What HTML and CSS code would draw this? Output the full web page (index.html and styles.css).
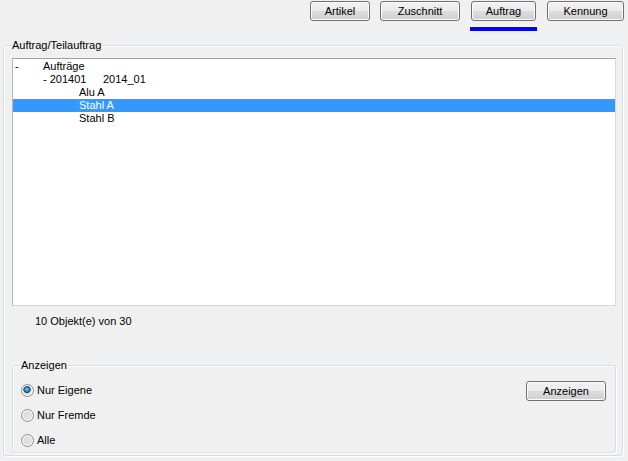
FILE: index.html
```html
<!DOCTYPE html>
<html lang="de">
<head>
<meta charset="utf-8">
<title>Auftrag</title>
<link rel="stylesheet" href="styles.css">
</head>
<body>
<div class="toolbar">
  <div class="tab"><button class="btn w-artikel">Artikel</button></div>
  <div class="tab"><button class="btn w-zuschnitt">Zuschnitt</button></div>
  <div class="tab active"><button class="btn w-auftrag">Auftrag</button><div class="indicator"></div></div>
  <div class="tab"><button class="btn w-kennung">Kennung</button></div>
</div>
<fieldset class="group outer">
  <legend>Auftrag/Teilauftrag</legend>
  <div class="tree">
    <div class="row lvl0"><span class="toggle0">-</span><span>Aufträge</span></div>
    <div class="row lvl1"><span class="toggle1">- 201401</span><span>2014_01</span></div>
    <div class="row lvl2"><span>Alu A</span></div>
    <div class="row lvl2 selected"><span>Stahl A</span></div>
    <div class="row lvl2"><span>Stahl B</span></div>
  </div>
  <div class="status">10 Objekt(e) von 30</div>
  <fieldset class="group inner">
    <legend>Anzeigen</legend>
    <div class="inner-body">
      <div class="radios">
        <label class="radio-row"><span class="radio checked"></span>Nur Eigene</label>
        <label class="radio-row"><span class="radio"></span>Nur Fremde</label>
        <label class="radio-row"><span class="radio"></span>Alle</label>
      </div>
      <button class="btn w-anzeigen">Anzeigen</button>
    </div>
  </fieldset>
</fieldset>
</body>
</html>
```
FILE: styles.css
```css
html, body {
  margin: 0;
  padding: 0;
  background: #f0f0f0;
}
body {
  font-family: "Liberation Sans", Arial, sans-serif;
  font-size: 11px;
  line-height: 13px;
  color: #000;
  width: 628px;
  height: 461px;
  overflow: hidden;
}

/* top toolbar */
.toolbar {
  display: flex;
  justify-content: flex-end;
  gap: 10px;
  padding: 1px 4px 0 0;
  height: 39px;
  box-sizing: border-box;
}
.tab {
  display: flex;
  flex-direction: column;
  align-items: center;
}
.indicator {
  width: 67px;
  height: 4px;
  margin-top: 6px;
  background: #0000ff;
}

.btn {
  font-family: inherit;
  font-size: 11px;
  line-height: 13px;
  color: #000;
  height: 20px;
  padding: 0;
  margin: 0;
  border: 1px solid #707070;
  border-radius: 3px;
  background: linear-gradient(#f2f2f2 0%, #ebebeb 50%, #dddddd 50%, #cfcfcf 100%);
  box-shadow: inset 0 0 0 1px #fcfcfc;
  box-sizing: border-box;
}
.w-artikel { width: 60px; }
.w-zuschnitt { width: 80px; }
.w-auftrag { width: 65px; }
.w-kennung { width: 77px; }
.w-anzeigen { width: 80px; margin-top: 3px; }

/* group boxes */
.group {
  min-width: 0;
  border: 1px solid #d5dfe5;
  border-radius: 3px;
  box-shadow: 1px 1px 0 #ffffff, inset 1px 1px 0 #ffffff;
}
.group > legend {
  padding: 0 1px;
  margin-left: -1px;
  line-height: 13px;
  background: #f0f0f0;
}
.outer {
  margin: 0 5px 0 3px;
  padding: 6px 6px 2px 8px;
}
.inner {
  margin: 31px 0 0 0;
  padding: 6px 9px 0 8px;
}

/* tree list */
.tree {
  height: 248px;
  box-sizing: border-box;
  padding-top: 1px;
  background: #ffffff;
  border: 1px solid #d9d9d9;
  border-top-color: #a0a0a0;
  border-left-color: #b9b9b9;
}
.row {
  display: flex;
  height: 13px;
  line-height: 13px;
  white-space: nowrap;
}
.lvl0 { padding-left: 2px; }
.lvl1 { padding-left: 30px; }
.lvl2 { padding-left: 66px; }
.toggle0 { width: 28px; }
.toggle1 { width: 60px; }
.row.selected {
  background: #3399ff;
  color: #ffffff;
}

.status {
  margin-top: 9px;
  padding-left: 23px;
  line-height: 13px;
}

/* Anzeigen box */
.inner-body {
  display: flex;
  justify-content: space-between;
  align-items: flex-start;
}
.radios {
  display: flex;
  flex-direction: column;
}
.radio-row {
  display: flex;
  align-items: center;
  height: 25px;
  gap: 3px;
}
.radio-row:last-child {
  height: 24px;
  align-items: flex-start;
  padding-top: 6px;
  box-sizing: border-box;
}
.radio {
  width: 13px;
  height: 13px;
  box-sizing: border-box;
  border-radius: 50%;
  border: 1px solid #8e8f8f;
  background: radial-gradient(circle at 50% 50%, #e6e6e6 0, #dcdcdc 3px, #f4f4f4 6px);
  box-shadow: inset 0 0 0 1px #f7f7f7;
}
.radio.checked {
  background:
    radial-gradient(circle at 45% 40%, #8cd0f5 0, #2f82c0 2px, #0e4a7b 3.4px, rgba(255,255,255,0) 4px),
    radial-gradient(circle at 50% 50%, #e6e6e6 0, #dcdcdc 3px, #f4f4f4 6px);
}
```
